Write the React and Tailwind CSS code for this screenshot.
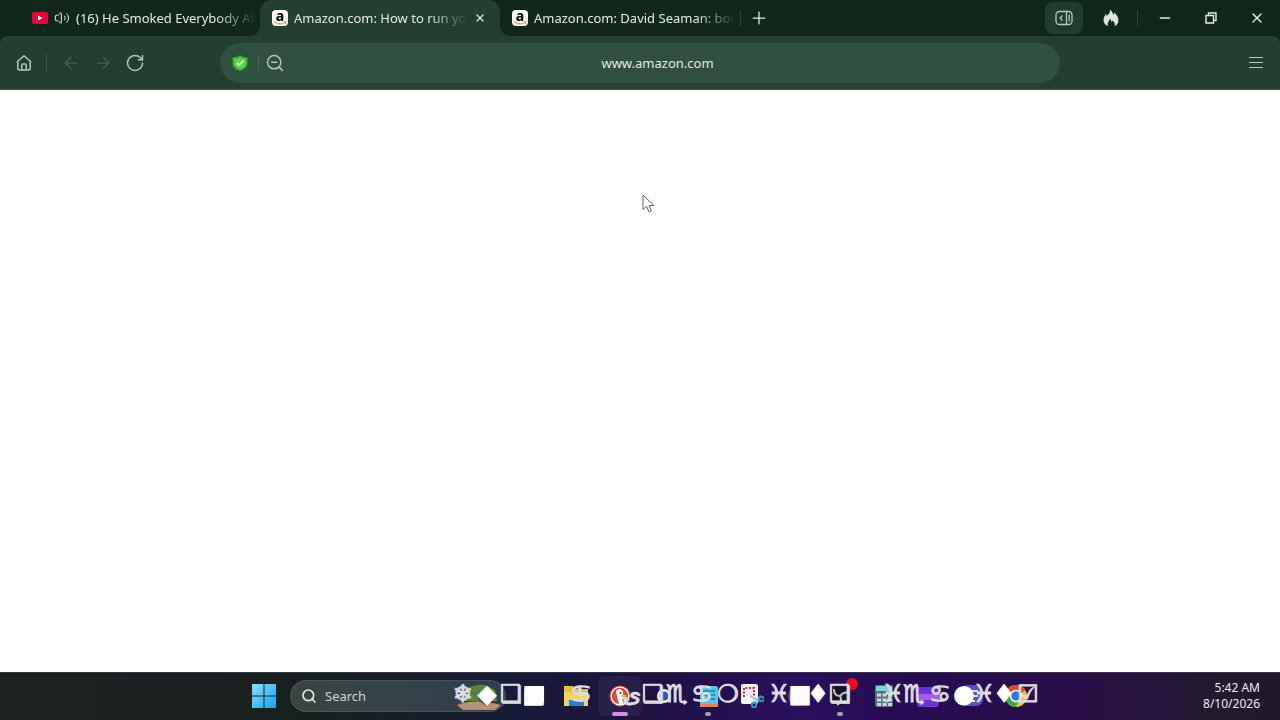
import React, { useState } from "react";
import {
  ArrowLeft,
  ArrowRight,
  Minus,
  Plus,
  RotateCw,
  Search,
  Volume2,
  X,
  ZoomOut,
} from "lucide-react";

const TABS = [
  { id: 1, title: "(16) He Smoked Everybody Afte", icon: "youtube", audio: true },
  { id: 2, title: "Amazon.com: How to run you", icon: "amazon" },
  { id: 3, title: "Amazon.com: David Seaman: book", icon: "amazon" },
];

function YoutubeIcon() {
  return (
    <svg viewBox="0 0 16 16" className="size-4 shrink-0">
      <rect y="2" width="16" height="12" rx="2" fill="#e3083a" />
      <path d="M6 5.5 10.5 8 6 10.5Z" fill="#fff" />
    </svg>
  );
}

function AmazonIcon() {
  return (
    <span className="relative flex size-4 shrink-0 justify-center rounded-sm bg-white">
      <span className="text-sm leading-3 font-bold text-black">a</span>
      <svg viewBox="0 0 16 16" className="absolute inset-0 size-4" fill="none" stroke="#e8a13a" strokeWidth="1.2">
        <path d="M2 11.5Q7.5 15.8 13 12.6M11.5 11.8 14 11.6 13.5 14" />
      </svg>
    </span>
  );
}

function TabFlare({ className }) {
  return (
    <svg viewBox="0 0 10 10" className={`absolute bottom-0 size-2.5 ${className}`}>
      <path d="M10 0V10H0A10 10 0 0 0 10 0Z" fill="#233f31" />
    </svg>
  );
}

function Tab({ tab, active, onSelect }) {
  return (
    <div
      className={`relative flex h-full w-60 min-w-0 items-center pl-3 ${
        active ? "rounded-t-xl bg-[#233f31]" : ""
      }`}
    >
      {active && <TabFlare className="-left-2.5" />}
      <button
        onClick={onSelect}
        className={`flex min-w-0 flex-1 items-center gap-1.5 ${active ? "" : "pr-1"}`}
      >
        {tab.icon === "youtube" ? <YoutubeIcon /> : <AmazonIcon />}
        {tab.audio && <Volume2 className="size-4 shrink-0" strokeWidth={1.5} />}
        <span className="min-w-0 flex-1 overflow-hidden text-left text-[13px] leading-5 whitespace-nowrap [mask-image:linear-gradient(to_right,black_calc(100%-40px),transparent)]">
          {tab.title}
        </span>
      </button>
      {active && (
        <button aria-label="Close tab" className="mr-2 flex h-6 w-6 items-center justify-center">
          <X className="size-3" strokeWidth={2.5} />
        </button>
      )}
      {active && <TabFlare className="-right-2.5 -scale-x-100" />}
    </div>
  );
}

function TitleBar() {
  const [activeTab, setActiveTab] = useState(2);
  return (
    <header className="flex h-9 items-center bg-[#12271c] pl-5 text-[#e2ede5]">
      {TABS.map((tab) => (
        <Tab
          key={tab.id}
          tab={tab}
          active={tab.id === activeTab}
          onSelect={() => setActiveTab(tab.id)}
        />
      ))}
      <span className="h-4 w-px bg-[#2f4539]" />
      <button aria-label="New tab" className="flex h-8 w-9 items-center justify-center">
        <Plus className="size-5" strokeWidth={1.5} />
      </button>
      <div className="ml-auto flex items-center">
        <button aria-label="Sidebar" className="flex h-8 w-9.5 items-center justify-center rounded-lg bg-[#203e30]">
          <svg viewBox="0 0 18 16" className="h-4 w-4.5" fill="none" stroke="#b9c9be" strokeWidth="1.3">
            <rect x="1" y="1.5" width="16" height="13" rx="3.5" />
            <path d="M11.5 1.5V14.5M14.2 4.5V11.5M7.5 5.5 5 8 7.5 10.5" />
          </svg>
        </button>
        <button aria-label="Clear data" className="ml-2.5 flex h-8 w-9 items-center justify-center">
          <svg viewBox="0 0 16 18" className="h-4.5 w-4" fill="#dde3de">
            <path d="M7 0.5C8.8 2 9.9 3.8 10.2 5.8 10.9 5.2 11.2 4.4 11.1 3.4 14 5.5 15.8 8.7 15.4 12 15.1 14.4 13.8 16.3 11.6 17.2 12.3 15 11.4 13 9.6 11.6 9.5 12.5 9 13 8.4 13.1 8.3 11.6 7.7 10.5 6.7 9.8 6.8 12 4.3 13 4.7 16 4.8 16.6 5 17 5.3 17.3 2.4 16.4 0.5 14 0.5 11 0.5 8.3 2 6.4 3 4.8 3.4 5.4 3.5 6.1 3.4 6.9 5.8 5.4 7.4 3.2 7 0.5Z" />
          </svg>
        </button>
        <span className="mr-1 ml-2 h-4 w-px bg-[#2f4539]" />
        <button aria-label="Minimize" className="flex h-8 w-11.5 items-center justify-center">
          <Minus className="size-4" strokeWidth={2} />
        </button>
        <button aria-label="Restore" className="flex h-8 w-11.5 items-center justify-center">
          <svg viewBox="0 0 12 12" className="size-3" fill="none" stroke="currentColor" strokeWidth="1.4">
            <path d="M1 3.5H8.5V11H1ZM3.5 3.5V1H11V8.5H8.5" />
          </svg>
        </button>
        <button aria-label="Close" className="flex h-8 w-11.5 items-center justify-center">
          <X className="size-4" />
        </button>
      </div>
    </header>
  );
}

function Toolbar() {
  return (
    <div className="bg-[#12271c]">
      <nav className="flex h-13.5 items-center rounded-t-lg border-b border-[#46554c] bg-[#233f31] text-[#b5c9bb]">
        <div className="flex w-55 shrink-0 items-center pl-3.5">
          <button aria-label="Home" className="flex w-5 justify-center">
            <svg viewBox="0 0 18 18" className="size-4.5" fill="none" stroke="currentColor" strokeWidth="1.5" strokeLinejoin="round">
              <path d="M1.8 8 9 1.8 16.2 8M2.8 7.2V14A2 2 0 0 0 4.8 16H13.2A2 2 0 0 0 15.2 14V7.2M6.8 16V11A1 1 0 0 1 7.8 10H10.2A1 1 0 0 1 11.2 11V16" />
            </svg>
          </button>
          <span className="mx-3 h-4.5 w-px bg-[#3d5849]" />
          <button aria-label="Back" disabled className="flex w-6 justify-center text-[#486254]">
            <ArrowLeft className="size-5" strokeWidth={1.5} />
          </button>
          <button aria-label="Forward" disabled className="ml-2 flex w-6 justify-center text-[#486254]">
            <ArrowRight className="size-5" strokeWidth={1.5} />
          </button>
          <button aria-label="Reload" className="ml-2 flex w-6 justify-center">
            <RotateCw className="size-5" strokeWidth={1.8} />
          </button>
        </div>
        <div className="flex h-10 flex-1 items-center rounded-full bg-[#305040] pr-8 pl-3">
          <button aria-label="Site protection">
            <svg viewBox="0 0 16 16" className="size-4">
              <path d="M8 0.3 10.5 1.8 15.5 2.5V8C15.5 12 12.5 14.5 8 16 3.5 14.5 0.5 12 0.5 8V2.5L5.5 1.8Z" fill="#39ad30" />
              <path d="M8 2 10 3.3 14 4V8C14 11 12 13 8 14.3 4 13 2 11 2 8V4L6 3.3Z" fill="#5bd34a" />
              <path d="M4.8 7.8 7.2 10 11.3 5.7" fill="none" stroke="#fff" strokeWidth="1.6" />
            </svg>
          </button>
          <span className="mr-1 ml-2.5 h-4 w-px bg-[#496456]" />
          <button aria-label="Zoom level" className="flex w-6 justify-center">
            <ZoomOut className="size-5" strokeWidth={1.8} />
          </button>
          <input
            aria-label="Address"
            defaultValue="www.amazon.com"
            className="min-w-0 flex-1 bg-transparent text-center text-[13px] leading-5 text-[#e2ede5] outline-none"
          />
        </div>
        <div className="flex w-55 shrink-0 justify-end pr-3.5">
          <button aria-label="Menu">
            <svg viewBox="0 0 20 20" className="size-5" stroke="currentColor" strokeWidth="1.2">
              <path d="M3 4.5H17M3 9.5H17M3 14.5H17" />
            </svg>
          </button>
        </div>
      </nav>
    </div>
  );
}

const APPS = [
  {
    name: "File Explorer",
    art: (
      <>
        <path d="M0 2H9L12 5H24V22H0Z" fill="#eebd42" />
        <path d="M0 8H24V22H0Z" fill="#f9d160" />
        <path d="M5 16H20V22H5Z" fill="#2681c8" />
      </>
    ),
  },
  {
    name: "DuckDuckGo",
    active: true,
    art: (
      <>
        <circle cx="12" cy="12" r="10.5" fill="#d94a38" />
        <circle cx="12" cy="12" r="8.8" fill="none" stroke="#fff" strokeWidth="1.3" />
        <path d="M8 8C9 4 15 4 15 9L16 14 15 20H11Z" fill="#fff" />
        <circle cx="12.5" cy="9" r="0.9" fill="#2c405c" />
        <path d="M13 11H18V13H13Z" fill="#f5b72d" />
        <path d="M14 15 19 14V19L15 18Z" fill="#4bab4a" />
      </>
    ),
  },
  {
    name: "Camera",
    art: (
      <>
        <circle cx="12" cy="12" r="7" fill="#f4f5f9" />
        <circle cx="12" cy="12" r="4.5" fill="#2b5cb8" />
      </>
    ),
  },
  {
    name: "Notepad",
    running: true,
    art: (
      <>
        <rect x="4" y="2" width="18" height="21" rx="2" fill="#54c5e5" />
        <path d="M7 7H19M7 11H19M7 15H19" stroke="#1d86ac" strokeWidth="1.5" />
        <path d="M4 20H22V23H4Z" fill="#e18455" />
      </>
    ),
  },
  {
    name: "Snipping Tool",
    art: (
      <>
        <rect x="1" y="0" width="17" height="20" rx="2" fill="#f4f2f4" />
        <path d="M4 13V4H14V13" fill="none" stroke="#c22d36" strokeWidth="2" strokeDasharray="2 1.5" />
        <path d="m10 12 10 5M21 12 14 19" stroke="#aebdc8" strokeWidth="2" />
        <circle cx="21.5" cy="15" r="2.3" fill="none" stroke="#2795cb" strokeWidth="2" />
        <circle cx="14" cy="21" r="2.3" fill="none" stroke="#2795cb" strokeWidth="2" />
      </>
    ),
  },
  {
    name: "Music",
    art: (
      <>
        <circle cx="14" cy="12" r="10" fill="#7d493c" />
        <circle cx="14" cy="12" r="8.5" fill="#4b4c58" />
      </>
    ),
  },
  {
    name: "OBS Studio",
    running: true,
    badge: true,
    art: (
      <>
        <circle cx="12" cy="12" r="10" fill="#17151c" />
        <path d="M12 12Q6 12 6 5M12 12Q16 7 21 9M12 12Q15 18 9 21" fill="none" stroke="#c3c0c8" strokeWidth="2" />
      </>
    ),
  },
  {
    name: "Calculator",
    art: (
      <>
        <rect x="3" y="1" width="18" height="22" rx="2" fill="#596f7b" />
        <rect x="4" y="2" width="16" height="5" fill="#78d6dd" />
        <path d="M5 11H20M5 16H20M5 20.5H20" stroke="#c7dbe0" strokeWidth="3" strokeDasharray="4 1.5" />
      </>
    ),
  },
  {
    name: "Clipchamp",
    art: (
      <>
        <rect x="1" y="3" width="22" height="20" rx="3" fill="#6d35d0" />
        <path d="M1 10H23V16H1Z" fill="#a65ce5" />
      </>
    ),
  },
  {
    name: "Chat",
    art: (
      <>
        <rect x="1" y="1" width="22" height="21" rx="7" fill="#5353c5" />
        <path d="M8 7H18M8 12H18M8 17H15" stroke="#e2def5" strokeWidth="2" />
      </>
    ),
  },
  {
    name: "Chrome",
    art: (
      <>
        <circle cx="12" cy="12" r="11" fill="#ecc43b" />
        <path d="M2.5 6.5A11 11 0 0 1 21.5 6.5L12 12Z" fill="#e2473b" />
        <path d="M2.5 6.5A11 11 0 0 0 12 23L15 17 7 14Z" fill="#39a853" />
        <circle cx="12" cy="12" r="5.5" fill="#3478dd" stroke="#fff" strokeWidth="1.5" />
      </>
    ),
  },
];

function AppButton({ app }) {
  return (
    <button
      aria-label={app.name}
      className={`relative flex h-10 w-11 shrink-0 items-center justify-center ${
        app.active ? "rounded-md bg-white/5" : ""
      }`}
    >
      <svg viewBox="0 0 24 24" className="size-6">
        {app.art}
      </svg>
      {app.active && <span className="absolute bottom-0 h-1 w-4 rounded-full bg-[#d48fe0]" />}
      {app.running && <span className="absolute bottom-0 h-1 w-1.5 rounded-full bg-[#a69bb5]" />}
      {app.badge && <span className="absolute top-0.5 right-1 size-3 rounded-full bg-[#e40d1c]" />}
    </button>
  );
}

// The line of symbols that runs across the taskbar: [glyph, cell width]
const SYMBOL_WORDS = [
  {
    gap: "",
    glyphs: [["❄", "w-5.5"], ["◆", "w-6.5 text-white"], ["❏", "w-5.5"], ["■", "w-6 text-white"]],
  },
  { gap: "ml-5.5", glyphs: [["♋", "w-6.5"]] },
  {
    gap: "ml-7.5",
    glyphs: [["ى", "w-4"], ["❏", "w-6.5"], ["♏", "w-5.5"], ["♋", "w-7"], ["❍", "w-6"]],
  },
  {
    gap: "ml-7",
    glyphs: [["♓", "w-5.5"], ["■", "w-5 text-white"], ["♦", "w-4 text-white"], ["❏", "w-7"]],
  },
  {
    gap: "ml-7.5",
    glyphs: [
      ["♓", "w-4.5"],
      ["♏", "w-6"],
      ["♋", "w-7"],
      ["●", "w-5 text-white"],
      ["♓", "w-5"],
      ["♦", "w-5 text-white"],
      ["☑", "w-7"],
    ],
  },
];

function SymbolLine() {
  return (
    <div className="pointer-events-none absolute inset-y-0 left-52.5 flex items-center pb-1 font-['DejaVu_Sans',sans-serif] text-2xl leading-6 text-[#dddbe2] [-webkit-text-stroke:1px]">
      {SYMBOL_WORDS.map((word, i) => (
        <div key={i} className={`flex ${word.gap}`}>
          {word.glyphs.map(([glyph, style], j) => (
            <span key={j} className={`flex shrink-0 justify-center ${style}`}>
              {glyph}
            </span>
          ))}
        </div>
      ))}
    </div>
  );
}

function Taskbar() {
  return (
    <footer className="relative flex h-12 items-center justify-center border-t border-[#38384a] bg-[linear-gradient(to_right,#1d2220_0%,#18201f_26%,#171b36_40%,#1e1240_50%,#2a0f5c_62%,#270c52_72%,#2b0e48_84%,#221a30_94%,#211829_100%)] pb-0.5">
      <div className="relative flex items-center">
        <button aria-label="Start" className="flex h-10 w-11 shrink-0 items-center justify-center">
          <svg viewBox="0 0 24 24" className="size-6">
            <defs>
              <linearGradient id="start" x2="1" y2="1">
                <stop stopColor="#82ddfa" />
                <stop offset="1" stopColor="#1ca3f2" />
              </linearGradient>
            </defs>
            <path d="M0 0H11.5V11.5H0ZM12.5 0H24V11.5H12.5ZM0 12.5H11.5V24H0ZM12.5 12.5H24V24H12.5Z" fill="url(#start)" />
          </svg>
        </button>
        <label className="mx-1 flex h-8 w-54 items-center gap-2 overflow-hidden rounded-full border border-white/10 bg-linear-to-r from-[#3a4642] to-[#303d4e] pl-2.5">
          <Search className="size-4 shrink-0 text-[#e3e7e6]" strokeWidth={2.5} />
          <input
            aria-label="Search"
            placeholder="Search"
            className="w-32 min-w-0 bg-transparent text-[13px] leading-5 outline-none placeholder:text-[#ced4d3]"
          />
          <svg viewBox="0 0 48 30" className="h-7.5 w-12 shrink-0">
            <path d="M8 10Q22 -2 38 9L40 20H7Z" fill="#59833f" />
            <path d="M0 24Q18 17 44 24L38 29H6Z" fill="#b89177" />
            <path d="M20 18 26 10 29 25Z" fill="#4a5140" />
          </svg>
        </label>
        <button aria-label="Task view" className="flex h-10 w-11 shrink-0 items-center justify-center">
          <svg viewBox="0 0 24 24" className="size-6">
            <rect x="4" y="5" width="18" height="17" rx="1.5" fill="#9a999f" />
            <rect x="6" y="2" width="18" height="17" rx="1.5" fill="#f7f7fa" />
          </svg>
        </button>
        {APPS.map((app) => (
          <AppButton key={app.name} app={app} />
        ))}
        <SymbolLine />
      </div>
      <div className="absolute right-5 text-right text-xs leading-4 text-[#eeeaf2]">
        <div>5:42 AM</div>
        <div>8/10/2026</div>
      </div>
    </footer>
  );
}

export default function App() {
  return (
    <div className="flex min-h-screen flex-col bg-white font-['Noto_Sans',sans-serif]">
      <TitleBar />
      <Toolbar />
      <main className="relative flex-1">
        <svg viewBox="0 0 14 20" className="absolute top-26 left-1/2 ml-0.5 h-5 w-3.5" fill="#fff" stroke="#666" strokeWidth="1">
          <path d="M1 1V15.5L4.5 12.3 7 18 9.3 17 7 11.5H12Z" />
        </svg>
      </main>
      <Taskbar />
    </div>
  );
}
